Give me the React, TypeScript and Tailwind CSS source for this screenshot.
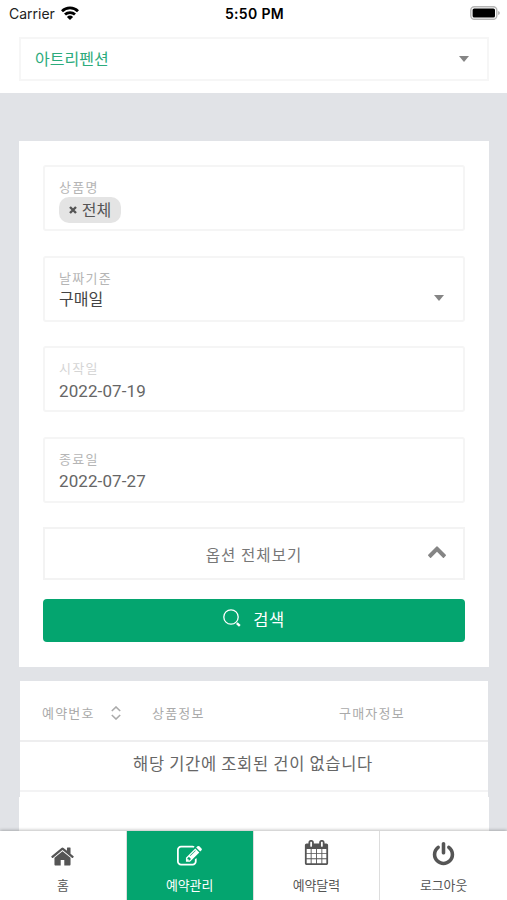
import { useState } from "react";
import type { ReactNode } from "react";

const icons = {
  home: "M1472 992v480q0 26-19 45t-45 19h-384v-384h-256v384h-384q-26 0-45-19t-19-45v-480q0-1 .5-3t.5-3l575-474 575 474q1 2 1 6zm223-69l-62 74q-8 9-21 11h-3q-13 0-21-7l-692-577-692 577q-12 8-24 7-13-2-21-11l-62-74q-8-10-7-23.5t11-21.5l719-599q32-26 76-26t76 26l244 204v-195q0-14 9-23t23-9h192q14 0 23 9t9 23v408l219 182q10 8 11 21.5t-7 23.5z",
  edit: "M888 1184l116-116-152-152-116 116v56h96v96h56zm440-720q-16-16-33 1l-350 350q-17 17-1 33t33-1l350-350q17-17 1-33zm80 594v190q0 119-84.5 203.5t-203.5 84.5h-832q-119 0-203.5-84.5t-84.5-203.5v-832q0-119 84.5-203.5t203.5-84.5h832q63 0 117 25 15 7 18 23 3 17-9 29l-49 49q-14 14-32 8-23-6-45-6h-832q-66 0-113 47t-47 113v832q0 66 47 113t113 47h832q66 0 113-47t47-113v-126q0-13 9-22l64-64q15-15 35-7t20 29zm-96-738l288 288-672 672h-288v-288zm444 132l-92 92-288-288 92-92q28-28 68-28t68 28l152 152q28 28 28 68t-28 68z",
  calendar:
    "M192 1664h288v-288h-288v288zm352 0h320v-288h-320v288zm-352-352h288v-320h-288v320zm352 0h320v-320h-320v320zm-352-384h288v-288h-288v288zm736 736h320v-288h-320v288zm-384-736h320v-288h-320v288zm768 736h288v-288h-288v288zm-384-352h320v-320h-320v320zm-352-864v-288q0-13-9.5-22.5t-22.5-9.5h-64q-13 0-22.5 9.5t-9.5 22.5v288q0 13 9.5 22.5t22.5 9.5h64q13 0 22.5-9.5t9.5-22.5zm736 864h288v-320h-288v320zm-384-384h320v-288h-320v288zm384 0h288v-288h-288v288zm32-480v-288q0-13-9.5-22.5t-22.5-9.5h-64q-13 0-22.5 9.5t-9.5 22.5v288q0 13 9.5 22.5t22.5 9.5h64q13 0 22.5-9.5t9.5-22.5zm384-64v1280q0 52-38 90t-90 38h-1408q-52 0-90-38t-38-90v-1280q0-52 38-90t90-38h128v-96q0-66 47-113t113-47h64q66 0 113 47t47 113v96h384v-96q0-66 47-113t113-47h64q66 0 113 47t47 113v96h128q52 0 90 38t38 90z",
  power:
    "M1664 896q0 156-61 298t-164 245-245 164-298 61-298-61-245-164-164-245-61-298q0-182 80.5-343t226.5-270q43-32 95.5-25t83.5 50q32 42 24.5 94.5t-49.5 84.5q-98 74-151.5 181t-53.5 228q0 104 40.5 198.5t109.5 163.5 163.5 109.5 198.5 40.5 198.5-40.5 163.5-109.5 109.5-163.5 40.5-198.5q0-121-53.5-228t-151.5-181q-42-32-49.5-84.5t24.5-94.5q31-43 84-50t95 25q146 109 226.5 270t80.5 343zm-640-768v640q0 52-38 90t-90 38-90-38-38-90v-640q0-52 38-90t90-38 90 38 38 90z",
  chevronUp:
    "M1683 1331l-166 165q-19 19-45 19t-45-19l-531-531-531 531q-19 19-45 19t-45-19l-166-165q-19-19-19-45.5t19-45.5l742-741q19-19 45-19t45 19l742 741q19 19 19 45.5t-19 45.5z",
};

function Icon({ name, className }: { name: keyof typeof icons; className?: string }) {
  return (
    <svg viewBox="0 0 1792 1792" fill="currentColor" className={className}>
      <path d={icons[name]} />
    </svg>
  );
}

function Caret() {
  return (
    <svg viewBox="0 0 10 6" className="h-1.5 w-2.5 fill-[#858585]">
      <path d="M0 0h10L5 6z" />
    </svg>
  );
}

function StatusBar() {
  return (
    <div className="grid h-[37px] grid-cols-3 items-start pt-1 pr-[7px] pl-[9px] font-['Inter',sans-serif] text-[14px] leading-5 text-[#222]">
      <div className="flex items-center gap-[6px]">
        <span>Carrier</span>
        <svg viewBox="0 0 18 14" className="mb-0.5 h-3.5 w-[18px]" fill="none" stroke="#000" strokeWidth="2.8">
          <path d="M1 5.2a11.4 11.4 0 0 1 16 0M4 8.6a7.2 7.2 0 0 1 10 0" />
          <path d="M9 14L5.9 10.9a4.5 4.5 0 0 1 6.2 0z" fill="#000" stroke="none" />
        </svg>
      </div>
      <span className="text-center text-[14px] font-semibold tracking-[0.35px] text-black">5:50 PM</span>
      <svg viewBox="0 0 31 14" className="mt-0.5 h-3.5 w-[31px] justify-self-end">
        <rect x="1.8" y="0.8" width="26" height="12.4" rx="3.5" fill="#fff" stroke="#b5b5b5" strokeWidth="1.4" />
        <rect x="3.6" y="2.4" width="22.4" height="9.2" rx="1.6" />
        <path d="M29.2 5v4q1.6-.6 1.6-2t-1.6-2z" fill="#aaa" />
      </svg>
    </div>
  );
}

function Field({ label, faded, children }: { label: string; faded?: boolean; children: ReactNode }) {
  return (
    <div className="h-[66px] rounded-[3px] border-2 border-[#f5f5f5] px-[14px] pt-[11px]">
      <div className={`text-[13px] leading-[18px] tracking-[1.3px] ${faded ? "text-[#d5d5d5]" : "text-[#b5b5b5]"}`}>
        {label}
      </div>
      {children}
    </div>
  );
}

const tabs: { icon: keyof typeof icons; label: string; size: string }[] = [
  { icon: "home", label: "홈", size: "mt-1 size-[25px]" },
  { icon: "edit", label: "예약관리", size: "mt-1 size-[25px]" },
  { icon: "calendar", label: "예약달력", size: "mb-[3px] size-[25px]" },
  { icon: "power", label: "로그아웃", size: "size-[25px]" },
];

export default function App() {
  const [activeTab, setActiveTab] = useState("edit");

  return (
    <div className="flex h-[900px] w-[507px] flex-col overflow-hidden bg-[#e1e3e7] font-['Noto_Sans_CJK_KR',sans-serif] text-[#666]">
      <header className="h-[93px] shrink-0 bg-white">
        <StatusBar />
        <div className="mr-[18px] ml-[19px] flex h-[44px] items-center justify-between border-2 border-[#f6f6f6] pr-[18px] pl-[14px]">
          <span className="mb-0.5 text-[16px] leading-5 text-[#2cab7c]">아트리펜션</span>
          <Caret />
        </div>
      </header>

      <main className="min-h-0 flex-1 overflow-hidden pt-12">
        <section className="mr-[18px] ml-[19px] h-[526px] bg-white px-6 pt-6">
          <div className="flex flex-col gap-[24.5px]">
            <Field label="상품명">
              <div className="mt-px flex h-[26px] w-[62px] items-center justify-center gap-[5px] rounded-[10px] bg-[#e4e4e4] pb-0.5 text-[16px] leading-6 text-[#555]">
                <svg viewBox="0 0 8 8" className="mt-0.5 size-2" stroke="#555" strokeWidth="2.4">
                  <path d="M1 1l6 6M7 1L1 7" />
                </svg>
                전체
              </div>
            </Field>
            <Field label="날짜기준">
              <div className="-mt-px flex items-center justify-between pt-px pr-[5px] text-[16px] leading-6 text-[#444]">
                <span className="-mt-px">구매일</span>
                <Caret />
              </div>
            </Field>
            <Field label="시작일" faded>
              <div className="mt-0.5 font-['Roboto',sans-serif] text-[17px] leading-6 tracking-[0.1px]">2022-07-19</div>
            </Field>
            <Field label="종료일">
              <div className="mt-px font-['Roboto',sans-serif] text-[17px] leading-6 tracking-[0.1px]">2022-07-27</div>
            </Field>
          </div>

          <button className="mt-6 grid h-[53px] w-full grid-cols-[1fr_auto_1fr] items-center border-2 border-[#f3f3f3] pr-4">
            <span />
            <span className="mt-0.5 ml-4 text-[15.5px] leading-6 tracking-[1.1px] text-[#777]">옵션 전체보기</span>
            <Icon name="chevronUp" className="mb-1 size-5 justify-self-end text-[#858585]" />
          </button>
          <button className="mt-[19px] flex h-[43px] w-full items-center justify-center gap-3 rounded bg-[#04a56f] text-white">
            <svg viewBox="0 0 18 18" className="mb-1 size-[18px]" fill="none" stroke="currentColor" strokeWidth="1.3">
              <circle cx="8" cy="8" r="7.2" />
              <path d="M13.8 14.1l3 2.8" strokeWidth="2.4" />
            </svg>
            <span className="mb-0.5 text-[16.5px] leading-6 tracking-[0.6px]">검색</span>
          </button>
        </section>

        <section className="mr-[19px] ml-5 mt-[14px] h-[116px] bg-white">
          <div className="flex h-[61px] items-center border-b-2 border-[#eeeeef] pt-[5px] pl-[22px] text-[13px] leading-5 tracking-[1.2px] text-[#aaa]">
            <div className="flex w-[110px] items-center gap-4">
              예약번호
              <svg viewBox="0 0 10 14" className="h-3.5 w-2.5" fill="none" stroke="#aaa" strokeWidth="1.6">
                <path d="M.8 5L5 1l4.2 4M.8 9L5 13l4.2-4" />
              </svg>
            </div>
            <div className="w-[187px]">상품정보</div>
            <div>구매자정보</div>
          </div>
          <div className="flex h-[50px] items-center justify-center border-b-2 border-[#f3f3f4] pr-0.5 pb-[5px] text-[16.5px] tracking-[0.7px]">
            해당 기간에 조회된 건이 없습니다
          </div>
        </section>
        <div className="mr-[18px] ml-[19px] h-20 bg-white" />
      </main>

      <nav className="z-10 grid h-[69px] shrink-0 grid-cols-4 bg-white shadow-[0_-1px_3px_rgba(0,0,0,0.25)]">
        {tabs.map((tab) => (
          <button
            key={tab.icon}
            onClick={() => setActiveTab(tab.icon)}
            className={`flex flex-col items-center border-r border-[#ddd] last:border-r-0 ${
              activeTab === tab.icon ? "bg-[#04a56f] text-white" : "text-[#555]"
            }`}
          >
            <span className="flex h-[46px] items-center">
              <Icon name={tab.icon} className={tab.size} />
            </span>
            <span className="text-[12.9px] leading-4">{tab.label}</span>
          </button>
        ))}
      </nav>
    </div>
  );
}
